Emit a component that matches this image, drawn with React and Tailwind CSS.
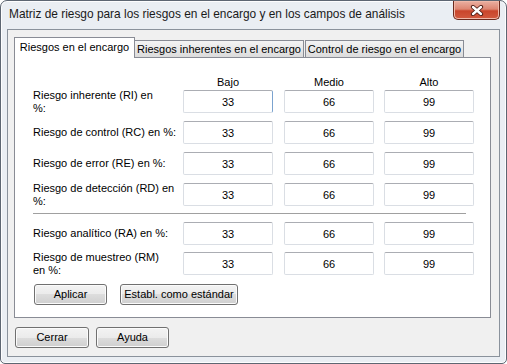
const font = { fontFamily: '"Liberation Sans", Arial, sans-serif' };

const rows = [
  { label: ["Riesgo inherente (RI) en", "%:"], focus: true },
  { label: ["Riesgo de control (RC) en %:"] },
  { label: ["Riesgo de error (RE) en %:"] },
  { label: ["Riesgo de detección (RD) en", "%:"] },
];

const rows2 = [
  { label: ["Riesgo analítico (RA) en %:"] },
  { label: ["Riesgo de muestreo (RM)", "en %:"] },
];

function Field({ value, focus, className = "" }) {
  return (
    <input
      readOnly
      value={value}
      className={`h-[23px] w-[90px] shrink-0 rounded-[2px] border border-[#dadee4] border-t-[#abadb3] bg-white text-center text-[11px] text-black outline-none ${
        focus ? "border-r-[#7ba3cf]" : ""
      } ${className}`}
    />
  );
}

function Row({ row, className = "" }) {
  const twoLines = row.label.length > 1;
  return (
    <div className={`flex h-[23px] items-center ${className}`}>
      <div className={`w-[150px] shrink-0 leading-[13px] text-black ${twoLines ? "mt-[1px]" : ""}`}>
        {row.label.map((l) => (
          <div key={l}>{l}</div>
        ))}
      </div>
      <Field value="33" focus={row.focus} />
      <Field value="66" className="ml-[11px]" />
      <Field value="99" className="ml-[10px]" />
    </div>
  );
}

function Button({ children, className = "" }) {
  return (
    <button
      className={`h-[21px] rounded-[3px] border border-[#707070] bg-[linear-gradient(#f3f3f3,#ebebeb_50%,#dddddd_50%,#cfcfcf)] text-[11px] text-black shadow-[inset_0_0_0_1px_#fbfbfb] ${className}`}
    >
      {children}
    </button>
  );
}

export default function App() {
  return (
    <div
      style={font}
      className="flex h-[364px] w-[507px] flex-col rounded-t-[7px] rounded-b-[5px] border border-[#5d6672] bg-[#eaeef3] px-[6px] pb-[6px] text-[11px] shadow-[inset_0_0_0_1px_#fdfdfe]"
    >
      {/* Barra de título */}
      <div className="flex h-[28px] items-center justify-between">
        <span className="ml-[2px] text-[11.9px] text-[#1a1a1a]">
          Matriz de riesgo para los riesgos en el encargo y en los campos de análisis
        </span>
        <button className="flex h-[19px] w-[47px] items-center justify-center self-start rounded-b-[5px] border border-t-0 border-[#6b2a1d] bg-[linear-gradient(#eab0a2,#dd8672_45%,#c9452b_55%,#d25a3f)] shadow-[inset_0_0_0_1px_#f0b8a8]">
          <svg width="14" height="11" viewBox="0 0 14 11">
            <path d="M3 2 L11 9 M11 2 L3 9" stroke="#4a1a12" strokeWidth="4.2" strokeLinecap="round" />
            <path d="M3 2 L11 9 M11 2 L3 9" stroke="#ffffff" strokeWidth="2.4" strokeLinecap="round" />
          </svg>
        </button>
      </div>

      {/* Área cliente */}
      <div className="flex flex-1 flex-col border border-[#8a929c] bg-[#f0f0f0] pl-[6px] pr-[8px] pt-[7px]">
        {/* Pestañas */}
        <div className="flex h-[20px] items-end">
          <div className="relative z-10 -mb-px flex h-[21px] w-[121px] items-center justify-center border border-b-0 border-[#898c95] bg-white pb-[1px] text-black">
            Riesgos en el encargo
          </div>
          <div className="flex h-[17px] w-[169px] items-center justify-center border border-b-0 border-l-0 border-[#898c95] bg-linear-to-b from-[#f4f4f4] to-[#dcdcdc] text-black">
            Riesgos inherentes en el encargo
          </div>
          <div className="ml-px flex h-[17px] w-[159px] items-center justify-center border border-b-0 border-[#898c95] bg-linear-to-b from-[#f4f4f4] to-[#dcdcdc] text-black">
            Control de riesgo en el encargo
          </div>
        </div>

        {/* Panel */}
        <div className="flex h-[261px] w-[477px] flex-col border border-[#898c95] bg-white pl-[18px] pt-[17px]">
          <div className="flex h-[15px] items-center leading-[15px] text-black">
            <div className="w-[150px]" />
            <div className="w-[90px] text-center">Bajo</div>
            <div className="ml-[11px] w-[90px] text-center">Medio</div>
            <div className="ml-[10px] w-[90px] text-center">Alto</div>
          </div>

          <div className="flex flex-col gap-[8px]">
            {rows.map((r, i) => (
              <Row key={i} row={r} />
            ))}
          </div>

          <div className="mt-[7px] h-px w-[433px] bg-[#a0a0a0]" />

          <div className="mt-[8px] flex flex-col gap-[7px]">
            {rows2.map((r, i) => (
              <Row key={i} row={r} />
            ))}
          </div>

          <div className="ml-px mt-[9px] flex gap-[13px]">
            <Button className="w-[73px]">Aplicar</Button>
            <Button className="w-[118px]">Establ. como estándar</Button>
          </div>
        </div>

        {/* Botones inferiores */}
        <div className="ml-px mt-[9px] flex gap-[7px]">
          <Button className="w-[74px]">Cerrar</Button>
          <Button className="w-[73px]">Ayuda</Button>
        </div>
      </div>
    </div>
  );
}
